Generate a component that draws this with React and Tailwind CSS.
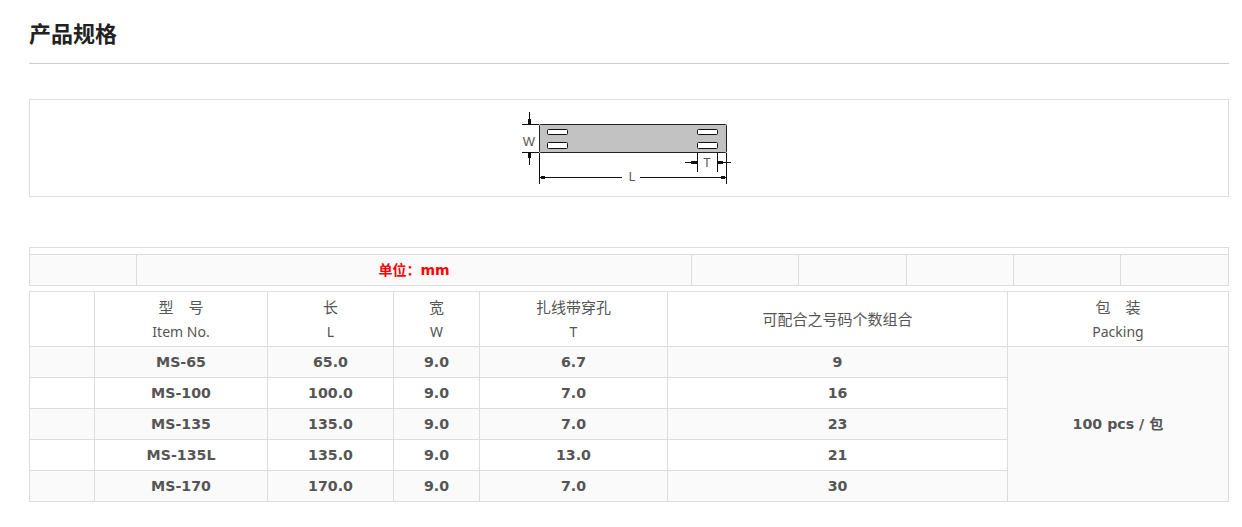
const font = 'font-["DejaVu_Sans","Noto_Sans_CJK_SC",sans-serif]';

const rows = [
  ['MS-65', '65.0', '9.0', '6.7', '9'],
  ['MS-100', '100.0', '9.0', '7.0', '16'],
  ['MS-135', '135.0', '9.0', '7.0', '23'],
  ['MS-135L', '135.0', '9.0', '13.0', '21'],
  ['MS-170', '170.0', '9.0', '7.0', '30'],
];

const Diagram = () => (
  <svg width="220" height="86" viewBox="519 105 220 86" fill="none" stroke="#111" strokeWidth="1">
    <rect x="539.5" y="124.5" width="187" height="28" rx="1" fill="#c2c2c2" stroke="#222" />
    <rect x="547.5" y="129.5" width="20" height="5" rx="1" fill="#fff" />
    <rect x="547.5" y="142.5" width="20" height="6" rx="1" fill="#fff" />
    <rect x="697.5" y="129.5" width="20" height="5" rx="1" fill="#fff" />
    <rect x="697.5" y="142.5" width="20" height="6" rx="1" fill="#fff" />
    {/* W dimension */}
    <path d="M522 124.5H539M522 152.5H539M529.5 112V124M529.5 153V165" />
    <path d="M528 119h3v5h-3zM528 153h3v5h-3z" fill="#111" stroke="none" />
    {/* L dimension */}
    <path d="M539.5 153V184M726.5 153V184M540 177.5H622M640 177.5H726" />
    <path d="M541 176h4v3h-4zM721 176h4v3h-4z" fill="#111" stroke="none" />
    {/* T dimension */}
    <path d="M697.5 153V172M717.5 153V172M685 162.5H697M718 162.5H731" />
    <path d="M691 161h6v3h-6zM718 161h5v3h-5z" fill="#111" stroke="none" />
    <g fill="#555" stroke="none" fontFamily="Liberation Sans, sans-serif" textAnchor="middle">
      <text x="529" y="146" fontSize="13">W</text>
      <text x="707" y="167" fontSize="12">T</text>
      <text x="632" y="181" fontSize="12">L</text>
    </g>
  </svg>
);

const cell = 'border border-[#dddddd] p-0 text-center align-middle';
const twoLine = `${cell} pt-[2px]`;
const latin = 'text-[14px] leading-[26px]';

export default function App() {
  return (
    <div className={`w-[1242px] h-[527px] bg-white pl-[29px] pr-[13px] text-[#555555] ${font}`}>
      <div className="h-[64px] border-b border-[#cccccc] pt-[18px]">
        <h2 className='text-[22px] leading-[28px] font-bold text-[#222222] font-["Noto_Sans_CJK_SC",sans-serif]'>产品规格</h2>
      </div>

      <div className="mt-[35px] h-[98px] w-[1200px] border border-[#dddddd] flex items-center justify-center">
        <Diagram />
      </div>

      <table className="mt-[50px] w-[1199px] table-fixed border-collapse">
        <colgroup>
          <col className="w-[107px]" />
          <col className="w-[555px]" />
          <col className="w-[107px]" />
          <col className="w-[108px]" />
          <col className="w-[107px]" />
          <col className="w-[107px]" />
          <col className="w-[108px]" />
        </colgroup>
        <tbody>
          <tr className="h-[7px]">
            <td colSpan={7} className={cell}></td>
          </tr>
          <tr className="h-[31px] bg-[#fafafa]">
            <td className={cell}></td>
            <td className={`${cell} text-[14px] font-bold text-[#ff0000]`}>单位：mm</td>
            <td className={cell}></td>
            <td className={cell}></td>
            <td className={cell}></td>
            <td className={cell}></td>
            <td className={cell}></td>
          </tr>
        </tbody>
      </table>

      <table className="mt-[5px] w-[1199px] table-fixed border-collapse">
        <colgroup>
          <col className="w-[65px]" />
          <col className="w-[173px]" />
          <col className="w-[126px]" />
          <col className="w-[86px]" />
          <col className="w-[188px]" />
          <col className="w-[340px]" />
          <col className="w-[221px]" />
        </colgroup>
        <tbody>
          <tr className='h-[55px] text-[15px] leading-[24px] font-["Noto_Sans","Noto_Sans_CJK_SC",sans-serif]'>
            <td className={cell}></td>
            <td className={twoLine}><div className="whitespace-pre">型　号</div><div className={latin}>Item No.</div></td>
            <td className={twoLine}><div>长</div><div className={latin}>L</div></td>
            <td className={twoLine}><div>宽</div><div className={latin}>W</div></td>
            <td className={twoLine}><div>扎线带穿孔</div><div className={latin}>T</div></td>
            <td className={cell}>可配合之号码个数组合</td>
            <td className={twoLine}><div className="whitespace-pre">包　装</div><div className={latin}>Packing</div></td>
          </tr>
          {rows.map((row, i) => (
            <tr key={row[0]} className={`h-[31px] text-[14.2px] font-bold ${i % 2 === 0 ? 'bg-[#fafafa]' : 'bg-white'}`}>
              <td className={cell}></td>
              {row.map((v, j) => <td key={j} className={`${cell} pt-[2px]`}>{v}</td>)}
              {i === 0 && <td rowSpan={5} className={`${cell} pt-[2px] bg-[#fafafa]`}>100 pcs / 包</td>}
            </tr>
          ))}
        </tbody>
      </table>
    </div>
  );
}
